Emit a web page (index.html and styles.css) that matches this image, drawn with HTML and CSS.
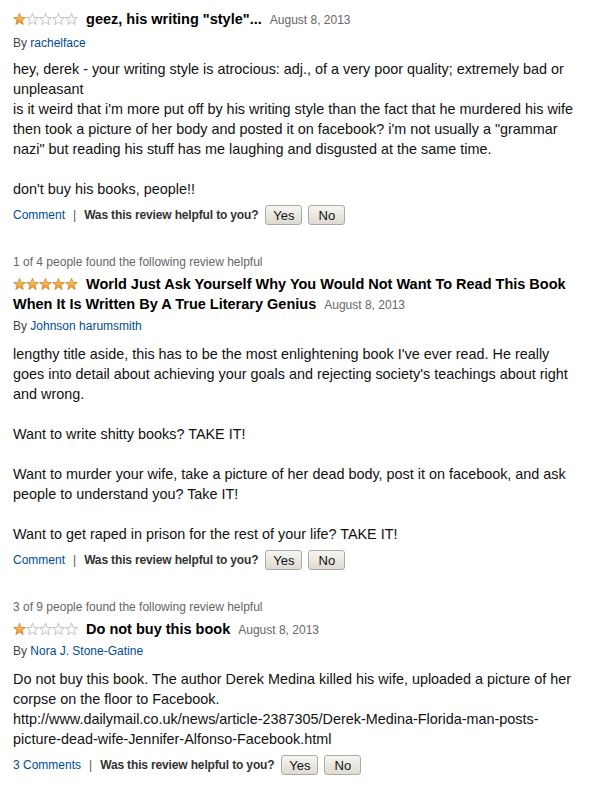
FILE: index.html
```html
<!DOCTYPE html>
<html lang="en">
<head>
  <meta charset="UTF-8">
  <title>Customer Reviews</title>
  <link rel="stylesheet" href="styles.css">
</head>
<body>

  <svg width="0" height="0" class="defs">
    <defs>
      <linearGradient id="gold" x1="0" y1="0" x2="0" y2="1">
        <stop offset="0" stop-color="#fdd57a"/>
        <stop offset="1" stop-color="#e88d22"/>
      </linearGradient>
      <path id="star" d="M6.5 0.3 L8.03 4.4 L12.4 4.55 L8.97 7.3 L10.2 11.6 L6.5 9.1 L2.8 11.6 L4.03 7.3 L0.6 4.55 L4.97 4.4 Z"/>
    </defs>
  </svg>

  <!-- Review 1 -->
  <div class="review first">
    <div class="title-row">
      <svg class="stars" width="65" height="12" viewBox="0 0 65 12">
        <use href="#star" class="on"/>
        <use href="#star" x="13" class="off"/>
        <use href="#star" x="26" class="off"/>
        <use href="#star" x="39" class="off"/>
        <use href="#star" x="52" class="off"/>
      </svg>
      <b class="title">geez, his writing "style"...</b>
      <span class="date">August 8, 2013</span>
    </div>
    <div class="byline">By <a href="#">rachelface</a></div>
    <div class="text">
      hey, derek - your writing style is atrocious: adj., of a very poor quality; extremely bad or unpleasant<br>
      is it weird that i'm more put off by his writing style than the fact that he murdered his wife then took a picture of her body and posted it on facebook? i'm not usually a "grammar nazi" but reading his stuff has me laughing and disgusted at the same time.<br>
      <br>
      don't buy his books, people!!
    </div>
    <div class="actions">
      <a href="#">Comment</a>
      <span class="sep">|</span>
      <b>Was this review helpful to you?</b>
      <button class="btn">Yes</button>
      <button class="btn">No</button>
    </div>
  </div>

  <!-- Review 2 -->
  <div class="review">
    <div class="helpful">1 of 4 people found the following review helpful</div>
    <div class="title-row">
      <svg class="stars" width="65" height="12" viewBox="0 0 65 12">
        <use href="#star" class="on"/>
        <use href="#star" x="13" class="on"/>
        <use href="#star" x="26" class="on"/>
        <use href="#star" x="39" class="on"/>
        <use href="#star" x="52" class="on"/>
      </svg>
      <b class="title">World Just Ask Yourself Why You Would Not Want To Read This Book When It Is Written By A True Literary Genius</b>
      <span class="date">August 8, 2013</span>
    </div>
    <div class="byline">By <a href="#">Johnson harumsmith</a></div>
    <div class="text">
      lengthy title aside, this has to be the most enlightening book I've ever read. He really goes into detail about achieving your goals and rejecting society's teachings about right and wrong.<br>
      <br>
      Want to write shitty books? TAKE IT!<br>
      <br>
      Want to murder your wife, take a picture of her dead body, post it on facebook, and ask people to understand you? Take IT!<br>
      <br>
      Want to get raped in prison for the rest of your life? TAKE IT!
    </div>
    <div class="actions">
      <a href="#">Comment</a>
      <span class="sep">|</span>
      <b>Was this review helpful to you?</b>
      <button class="btn">Yes</button>
      <button class="btn">No</button>
    </div>
  </div>

  <!-- Review 3 -->
  <div class="review">
    <div class="helpful">3 of 9 people found the following review helpful</div>
    <div class="title-row">
      <svg class="stars" width="65" height="12" viewBox="0 0 65 12">
        <use href="#star" class="on"/>
        <use href="#star" x="13" class="off"/>
        <use href="#star" x="26" class="off"/>
        <use href="#star" x="39" class="off"/>
        <use href="#star" x="52" class="off"/>
      </svg>
      <b class="title">Do not buy this book</b>
      <span class="date">August 8, 2013</span>
    </div>
    <div class="byline">By <a href="#">Nora J. Stone-Gatine</a></div>
    <div class="text">
      Do not buy this book. The author Derek Medina killed his wife, uploaded a picture of her corpse on the floor to Facebook.<br>
      http://www.dailymail.co.uk/news/article-2387305/Derek-Medina-Florida-man-posts-picture-dead-wife-Jennifer-Alfonso-Facebook.html
    </div>
    <div class="actions">
      <a href="#">3 Comments</a>
      <span class="sep">|</span>
      <b>Was this review helpful to you?</b>
      <button class="btn">Yes</button>
      <button class="btn">No</button>
    </div>
  </div>

</body>
</html>
```

FILE: styles.css
```css
body {
  margin: 0;
  padding: 0 13px;
  font-family: "Liberation Sans", Arial, Helvetica, sans-serif;
  color: #111;
  background: #fff;
}

a {
  color: #004b91;
  text-decoration: none;
}

.defs {
  position: absolute;
}

.review {
  margin-top: 29px;
}

.review.first {
  margin-top: 9px;
}

.helpful {
  font-size: 12px;
  line-height: 16px;
  color: #666;
  margin-bottom: 4px;
}

.title-row {
  font-size: 14.5px;
  line-height: 20px;
  margin-bottom: 3px;
}

.stars {
  vertical-align: -1px;
  margin-right: 4px;
}

.stars .on {
  fill: url(#gold);
  stroke: #c47a1c;
  stroke-width: 0.7;
}

.stars .off {
  fill: #fff;
  stroke: #a8a8a8;
  stroke-width: 0.7;
}

.title {
  font-weight: bold;
  color: #000;
  margin-right: 4px;
}

.date {
  font-size: 12px;
  color: #666;
}

.byline {
  font-size: 12px;
  line-height: 16px;
  color: #444;
  margin-bottom: 10px;
}

.first .byline {
  padding-top: 2px;
  margin-bottom: 8px;
}

.text {
  font-size: 14.4px;
  line-height: 20px;
  color: #111;
}

.actions {
  display: flex;
  align-items: center;
  margin-top: 6px;
  font-size: 12px;
  color: #333;
}

.actions .sep {
  color: #555;
  margin: 0 8px;
}

.actions b {
  letter-spacing: -0.15px;
  margin-right: 7px;
}

.btn {
  width: 37px;
  height: 20px;
  margin-right: 6px;
  padding: 0;
  font-family: "Liberation Sans", Arial, sans-serif;
  font-size: 13px;
  color: #111;
  background: linear-gradient(#f7f6f2, #dddad2);
  border: 1px solid #adaaa2;
  border-radius: 3px;
  cursor: pointer;
}
```
